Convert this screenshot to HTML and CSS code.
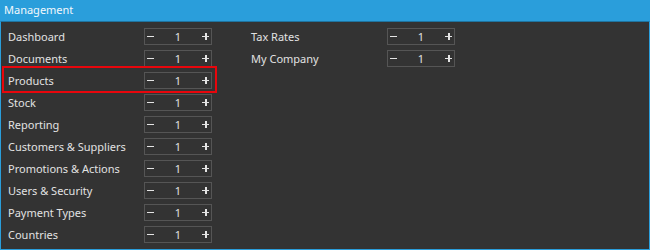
FILE: index.html
```html
<!DOCTYPE html>
<html>
<head>
    <title>Management</title>
    <link rel="stylesheet" href="styles.css">
</head>
<body>
    <div class="panel">
        <div class="panel-header">Management</div>
        <div class="panel-body">
            <div class="column">
                <div class="row"><span class="row-label">Dashboard</span><div class="stepper"><button class="step minus"></button><span class="step-value">1</span><button class="step plus"></button></div></div>
                <div class="row"><span class="row-label">Documents</span><div class="stepper"><button class="step minus"></button><span class="step-value">1</span><button class="step plus"></button></div></div>
                <div class="row selected"><span class="row-label">Products</span><div class="stepper"><button class="step minus"></button><span class="step-value">1</span><button class="step plus"></button></div></div>
                <div class="row"><span class="row-label">Stock</span><div class="stepper"><button class="step minus"></button><span class="step-value">1</span><button class="step plus"></button></div></div>
                <div class="row"><span class="row-label">Reporting</span><div class="stepper"><button class="step minus"></button><span class="step-value">1</span><button class="step plus"></button></div></div>
                <div class="row"><span class="row-label">Customers &amp; Suppliers</span><div class="stepper"><button class="step minus"></button><span class="step-value">1</span><button class="step plus"></button></div></div>
                <div class="row"><span class="row-label">Promotions &amp; Actions</span><div class="stepper"><button class="step minus"></button><span class="step-value">1</span><button class="step plus"></button></div></div>
                <div class="row"><span class="row-label">Users &amp; Security</span><div class="stepper"><button class="step minus"></button><span class="step-value">1</span><button class="step plus"></button></div></div>
                <div class="row"><span class="row-label">Payment Types</span><div class="stepper"><button class="step minus"></button><span class="step-value">1</span><button class="step plus"></button></div></div>
                <div class="row"><span class="row-label">Countries</span><div class="stepper"><button class="step minus"></button><span class="step-value">1</span><button class="step plus"></button></div></div>
            </div>
            <div class="column">
                <div class="row"><span class="row-label">Tax Rates</span><div class="stepper"><button class="step minus"></button><span class="step-value">1</span><button class="step plus"></button></div></div>
                <div class="row"><span class="row-label">My Company</span><div class="stepper"><button class="step minus"></button><span class="step-value">1</span><button class="step plus"></button></div></div>
            </div>
        </div>
    </div>
</body>
</html>
```

FILE: styles.css
```css
body {
    margin: 0;
    font-family: "Noto Sans", "Open Sans", sans-serif;
    background-color: #333333;
}

.panel {
    width: 650px;
    height: 250px;
    display: flex;
    flex-direction: column;
}

.panel-header {
    height: 21px;
    line-height: 20px;
    padding-left: 4px;
    background-color: #2a9edb;
    color: #f2f8fc;
    font-size: 11px;
}

.panel-body {
    flex: 1;
    display: grid;
    grid-template-columns: 211px 211px;
    column-gap: 32px;
    align-content: start;
    padding: 3px 0 0 3px;
    background-color: #333333;
    border: 1px solid #2a9edb;
    border-top-color: #1f74a0;
}

.column {
    display: flex;
    flex-direction: column;
}

.row {
    height: 22px;
    display: flex;
    align-items: center;
    padding: 0 3px 0 4px;
}

/* highlighted row */
.row.selected {
    position: relative;
}

.row.selected::after {
    content: "";
    position: absolute;
    top: -3px;
    bottom: -2px;
    left: -2px;
    right: -2px;
    border: 2px solid #e8060c;
}

.row-label {
    flex: 1;
    color: #e2e2e2;
    font-size: 11px;
}

.stepper {
    width: 68px;
    height: 17px;
    box-sizing: border-box;
    display: flex;
    align-items: center;
    border: 1px solid #555555;
}

.step {
    width: 11px;
    height: 100%;
    padding: 0;
    border: none;
    background: transparent;
    position: relative;
}

.step::before,
.plus::after {
    content: "";
    position: absolute;
    left: 2px;
    top: 7px;
    width: 7px;
    height: 1.5px;
    background-color: #e4e4e4;
}

.plus::after {
    left: 5px;
    top: 4px;
    width: 1.5px;
    height: 7px;
}

.step-value {
    flex: 1;
    text-align: center;
    color: #e2e2e2;
    font-size: 11px;
}
```
